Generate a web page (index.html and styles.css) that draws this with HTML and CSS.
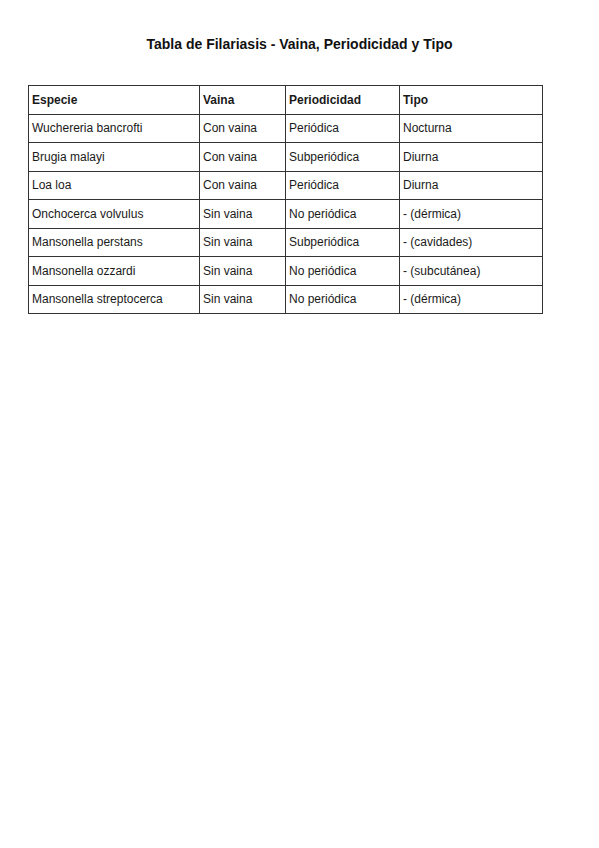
FILE: index.html
```html
<!DOCTYPE html>
<html lang="es">
<head>
<meta charset="utf-8">
<title>Tabla de Filariasis</title>
<link rel="stylesheet" href="styles.css">
</head>
<body>
<h1 class="title">Tabla de Filariasis - Vaina, Periodicidad y Tipo</h1>
<table class="grid">
  <colgroup>
    <col class="c1"><col class="c2"><col class="c3"><col class="c4">
  </colgroup>
  <thead>
    <tr><th>Especie</th><th>Vaina</th><th>Periodicidad</th><th>Tipo</th></tr>
  </thead>
  <tbody>
    <tr><td>Wuchereria bancrofti</td><td>Con vaina</td><td>Periódica</td><td>Nocturna</td></tr>
    <tr><td>Brugia malayi</td><td>Con vaina</td><td>Subperiódica</td><td>Diurna</td></tr>
    <tr><td>Loa loa</td><td>Con vaina</td><td>Periódica</td><td>Diurna</td></tr>
    <tr><td>Onchocerca volvulus</td><td>Sin vaina</td><td>No periódica</td><td>- (dérmica)</td></tr>
    <tr><td>Mansonella perstans</td><td>Sin vaina</td><td>Subperiódica</td><td>- (cavidades)</td></tr>
    <tr><td>Mansonella ozzardi</td><td>Sin vaina</td><td>No periódica</td><td>- (subcutánea)</td></tr>
    <tr><td>Mansonella streptocerca</td><td>Sin vaina</td><td>No periódica</td><td>- (dérmica)</td></tr>
  </tbody>
</table>
</body>
</html>
```
FILE: styles.css
```css
html, body {
  margin: 0;
  padding: 0;
  background: #fff;
}
body {
  font-family: "Liberation Sans", Arial, sans-serif;
  color: #1a1a1a;
}
.title {
  margin: 36px 0 0 0;
  font-size: 14px;
  line-height: 16px;
  font-weight: bold;
  text-align: center;
  color: #111;
}
.grid {
  margin: 33px 0 0 28px;
  border-collapse: collapse;
  table-layout: fixed;
  width: 514px;
  font-size: 12px;
}
.c1 { width: 171px; }
.c2 { width: 86px; }
.c3 { width: 114px; }
.c4 { width: 143px; }
.grid th, .grid td {
  border: 1px solid #333;
  height: 27.5px;
  padding: 0 0 0 3px;
  text-align: left;
  vertical-align: middle;
  white-space: nowrap;
}
.grid th {
  font-weight: bold;
}
```
